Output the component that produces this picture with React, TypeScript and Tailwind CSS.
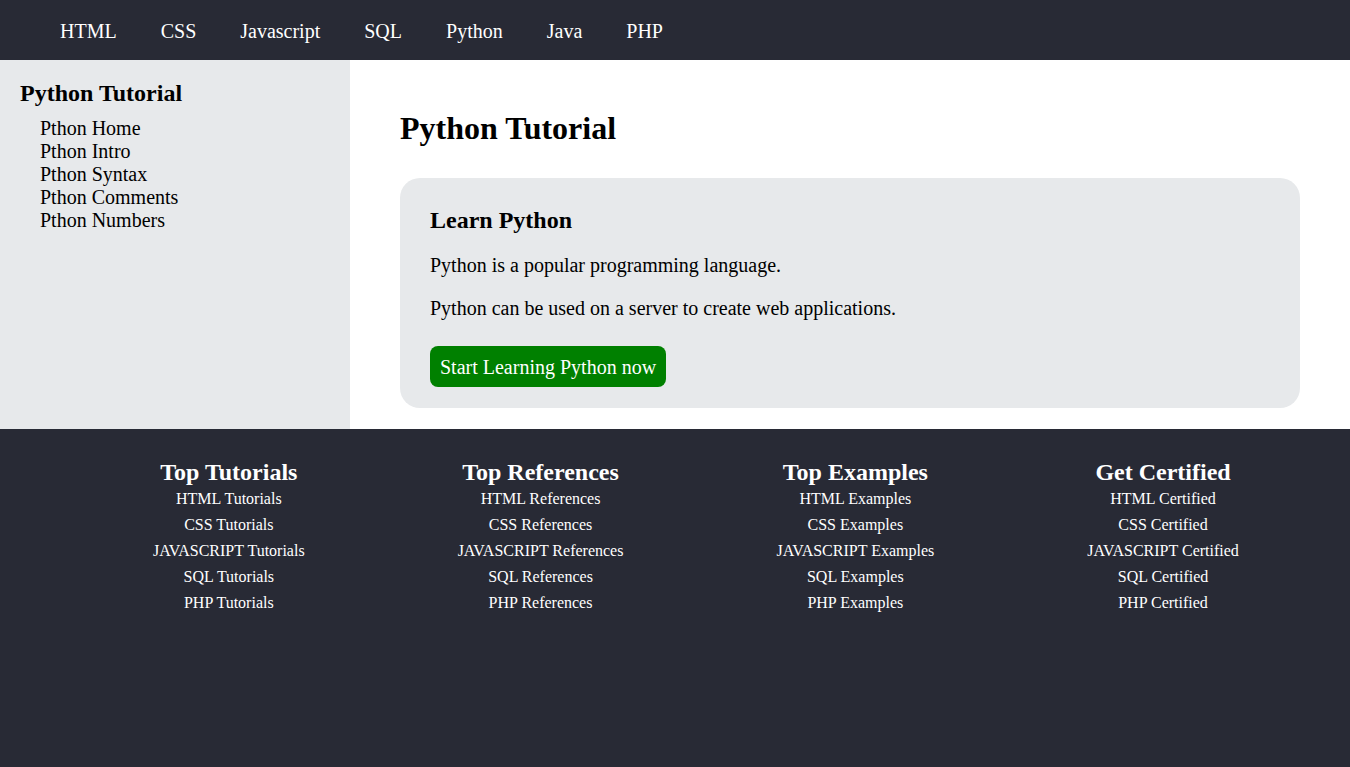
const navLinks = ["HTML", "CSS", "Javascript", "SQL", "Python", "Java", "PHP"];

const sideLinks = [
  "Pthon Home",
  "Pthon Intro",
  "Pthon Syntax",
  "Pthon Comments",
  "Pthon Numbers",
];

const footerCols = [
  { title: "Top Tutorials", suffix: "Tutorials" },
  { title: "Top References", suffix: "References" },
  { title: "Top Examples", suffix: "Examples" },
  { title: "Get Certified", suffix: "Certified" },
];

const langs = ["HTML", "CSS", "JAVASCRIPT", "SQL", "PHP"];

function Navbar() {
  return (
    <nav className="bg-[#282a35] h-[60px] flex items-center pt-[2px] pl-[60px] gap-[44px] text-white text-[20px]">
      {navLinks.map((link) => (
        <a key={link} href="#" className="leading-[23px]">
          {link}
        </a>
      ))}
    </nav>
  );
}

function Sidebar() {
  return (
    <aside className="w-[350px] shrink-0 bg-[#e7e9eb] pt-[19px] pl-[20px]">
      <h2 className="text-[24px] font-bold leading-[28px]">Python Tutorial</h2>
      <ul className="mt-[10px] pl-[20px] text-[20px] leading-[23px]">
        {sideLinks.map((link) => (
          <li key={link}>
            <a href="#">{link}</a>
          </li>
        ))}
      </ul>
    </aside>
  );
}

function Content() {
  return (
    <main className="flex-1 px-[50px] pt-[50px] pb-[21px]">
      <h1 className="text-[32px] font-bold leading-[37px]">Python Tutorial</h1>
      <div className="mt-[31px] bg-[#e7e9eb] rounded-[20px] pt-[28px] px-[30px] pb-[21px]">
        <h2 className="text-[24px] font-bold leading-[28px]">Learn Python</h2>
        <p className="mt-[20px] text-[20px] leading-[23px]">
          Python is a popular programming language.
        </p>
        <p className="mt-[20px] text-[20px] leading-[23px]">
          Python can be used on a server to create web applications.
        </p>
        <a
          href="#"
          className="inline-block mt-[26px] bg-[#008000] text-white text-[20px] leading-[23px] px-[10px] pt-[10px] pb-[8px] rounded-[8px]"
        >
          Start Learning Python now
        </a>
      </div>
    </main>
  );
}

function Footer() {
  return (
    <footer className="flex-1 bg-[#282a35] text-white pt-[29px] pl-[153px] flex gap-[153px]">
      {footerCols.map((col) => (
        <div key={col.title} className="flex flex-col items-center">
          <h3 className="text-[24px] font-bold leading-[28px]">{col.title}</h3>
          <ul className="text-[16px] leading-[26px] text-center">
            {langs.map((lang) => (
              <li key={lang}>
                <a href="#">
                  {lang} {col.suffix}
                </a>
              </li>
            ))}
          </ul>
        </div>
      ))}
    </footer>
  );
}

export default function App() {
  return (
    <div className="min-h-screen flex flex-col bg-white text-black font-['Liberation_Serif','Times_New_Roman',serif]">
      <Navbar />
      <div className="flex">
        <Sidebar />
        <Content />
      </div>
      <Footer />
    </div>
  );
}
